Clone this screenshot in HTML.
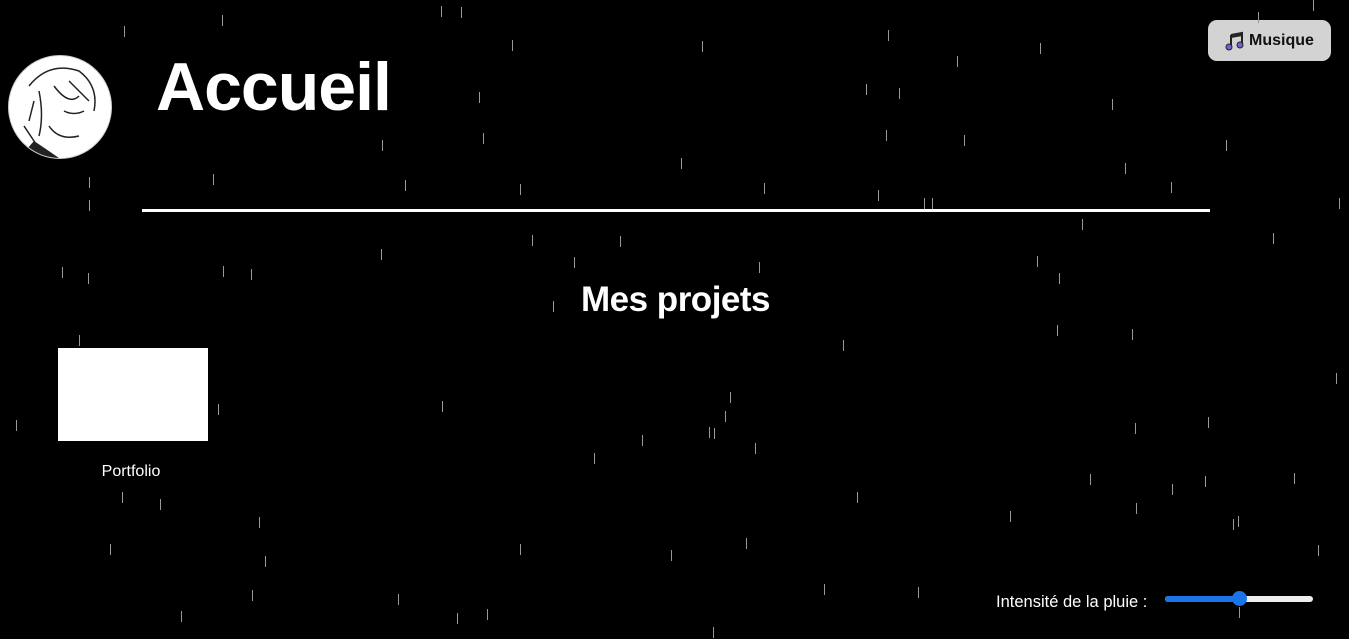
<!DOCTYPE html>
<html><head><meta charset="utf-8"><style>
body{margin:0;width:1349px;height:639px;background:#000;overflow:hidden;position:relative;font-family:"Liberation Sans",sans-serif;color:#fff}
.d{position:absolute;width:1px;height:11px;background:#999}
#av{position:absolute;left:8px;top:55px;width:102px;height:102px;border-radius:50%;background:#fff;border:1px solid #ccc;overflow:hidden}
h1{position:absolute;left:156px;top:48px;margin:0;font-size:68px;font-weight:bold;letter-spacing:-1px}
#hr{position:absolute;left:142px;top:209px;width:1068px;height:3px;background:#fff}
h2{position:absolute;left:0;width:1351px;text-align:center;top:280px;margin:0;font-size:35px;font-weight:bold;letter-spacing:-0.5px}
#card{position:absolute;left:58px;top:348px;width:150px;height:93px;background:#fff}
#cap{position:absolute;left:56px;width:150px;text-align:center;top:463px;font-size:16px}
#btn{position:absolute;left:1208px;top:20px;width:123px;height:41px;border-radius:9px;background:#d3d3d3;color:#111;font-weight:bold;font-size:16px;display:flex;align-items:center;justify-content:center;gap:4px}
#lab{position:absolute;left:996px;top:593px;font-size:16.5px}
#tr{position:absolute;left:1165px;top:596px;width:148px;height:6px;border-radius:3px;background:#eee}
#fill{position:absolute;left:1165px;top:596px;width:74px;height:6px;border-radius:3px;background:#1a73e8}
#th{position:absolute;left:1232px;top:591px;width:15px;height:15px;border-radius:50%;background:#1a73e8}
</style></head><body>
<div id="av"><svg width="102" height="102" viewBox="0 0 102 102"><g fill="none" stroke="#222" stroke-width="1.5"><path d="M20 30 Q40 5 70 15 Q90 30 85 55 M30 35 Q35 60 30 80 M45 30 Q60 50 70 40 M55 55 Q65 60 75 55 M40 70 Q50 85 70 80 M15 70 Q25 85 35 100 M60 25 L80 45 M25 45 L20 65"/></g><path d="M25 85 Q40 95 50 102 L10 102 Z" fill="#222"/></svg></div>
<h1>Accueil</h1>
<div id="hr"></div>
<h2>Mes projets</h2>
<div id="card"></div>
<div id="cap">Portfolio</div>
<div id="btn"><svg width="20" height="20" viewBox="0 0 20 20"><path d="M6 4 L17 2 V14" stroke="#222" stroke-width="2" fill="none"/><path d="M6 4 V16" stroke="#222" stroke-width="2"/><path d="M6 6 L17 4" stroke="#222" stroke-width="2"/><circle cx="4" cy="16" r="3" fill="#7b5cd6" stroke="#222"/><circle cx="15" cy="14" r="3" fill="#7b5cd6" stroke="#222"/></svg>Musique</div>
<div id="lab">Intensité de la pluie :</div>
<div id="tr"></div><div id="fill"></div><div id="th"></div>
<div class="d" style="left:222px;top:15px"></div><div class="d" style="left:441px;top:6px"></div><div class="d" style="left:461px;top:7px"></div><div class="d" style="left:124px;top:26px"></div><div class="d" style="left:512px;top:40px"></div><div class="d" style="left:702px;top:41px"></div><div class="d" style="left:888px;top:30px"></div><div class="d" style="left:1040px;top:43px"></div><div class="d" style="left:957px;top:56px"></div><div class="d" style="left:1258px;top:12px"></div><div class="d" style="left:1313px;top:0px"></div>
<div class="d" style="left:866px;top:84px"></div><div class="d" style="left:899px;top:88px"></div><div class="d" style="left:479px;top:92px"></div><div class="d" style="left:1112px;top:99px"></div><div class="d" style="left:886px;top:130px"></div><div class="d" style="left:964px;top:135px"></div><div class="d" style="left:483px;top:133px"></div><div class="d" style="left:382px;top:140px"></div><div class="d" style="left:1226px;top:140px"></div><div class="d" style="left:681px;top:158px"></div><div class="d" style="left:1125px;top:163px"></div><div class="d" style="left:213px;top:174px"></div><div class="d" style="left:89px;top:177px"></div><div class="d" style="left:405px;top:180px"></div><div class="d" style="left:520px;top:184px"></div><div class="d" style="left:764px;top:183px"></div><div class="d" style="left:1171px;top:182px"></div><div class="d" style="left:878px;top:190px"></div><div class="d" style="left:924px;top:198px"></div><div class="d" style="left:932px;top:198px"></div><div class="d" style="left:89px;top:200px"></div><div class="d" style="left:1339px;top:198px"></div>
<div class="d" style="left:1082px;top:219px"></div><div class="d" style="left:532px;top:235px"></div><div class="d" style="left:620px;top:236px"></div><div class="d" style="left:1273px;top:233px"></div><div class="d" style="left:381px;top:249px"></div><div class="d" style="left:574px;top:257px"></div><div class="d" style="left:759px;top:262px"></div><div class="d" style="left:1037px;top:256px"></div><div class="d" style="left:62px;top:267px"></div><div class="d" style="left:88px;top:273px"></div><div class="d" style="left:223px;top:266px"></div><div class="d" style="left:251px;top:269px"></div><div class="d" style="left:1059px;top:273px"></div><div class="d" style="left:553px;top:301px"></div><div class="d" style="left:1057px;top:325px"></div><div class="d" style="left:1132px;top:329px"></div><div class="d" style="left:79px;top:335px"></div><div class="d" style="left:843px;top:340px"></div><div class="d" style="left:1336px;top:373px"></div><div class="d" style="left:730px;top:392px"></div><div class="d" style="left:442px;top:401px"></div><div class="d" style="left:218px;top:404px"></div><div class="d" style="left:725px;top:411px"></div><div class="d" style="left:1208px;top:417px"></div><div class="d" style="left:16px;top:420px"></div><div class="d" style="left:709px;top:427px"></div><div class="d" style="left:714px;top:428px"></div><div class="d" style="left:1135px;top:423px"></div><div class="d" style="left:642px;top:435px"></div><div class="d" style="left:755px;top:443px"></div><div class="d" style="left:594px;top:453px"></div><div class="d" style="left:1090px;top:474px"></div><div class="d" style="left:1205px;top:476px"></div><div class="d" style="left:1294px;top:473px"></div><div class="d" style="left:1172px;top:484px"></div><div class="d" style="left:122px;top:492px"></div><div class="d" style="left:857px;top:492px"></div><div class="d" style="left:160px;top:499px"></div><div class="d" style="left:1136px;top:503px"></div><div class="d" style="left:1010px;top:511px"></div><div class="d" style="left:1238px;top:516px"></div><div class="d" style="left:1233px;top:519px"></div><div class="d" style="left:259px;top:517px"></div><div class="d" style="left:746px;top:538px"></div><div class="d" style="left:110px;top:544px"></div><div class="d" style="left:520px;top:544px"></div><div class="d" style="left:671px;top:550px"></div><div class="d" style="left:1318px;top:545px"></div><div class="d" style="left:265px;top:556px"></div><div class="d" style="left:824px;top:584px"></div><div class="d" style="left:918px;top:587px"></div><div class="d" style="left:252px;top:590px"></div><div class="d" style="left:398px;top:594px"></div><div class="d" style="left:1239px;top:607px"></div><div class="d" style="left:181px;top:611px"></div><div class="d" style="left:487px;top:609px"></div><div class="d" style="left:457px;top:613px"></div><div class="d" style="left:713px;top:627px"></div>
</body></html>
